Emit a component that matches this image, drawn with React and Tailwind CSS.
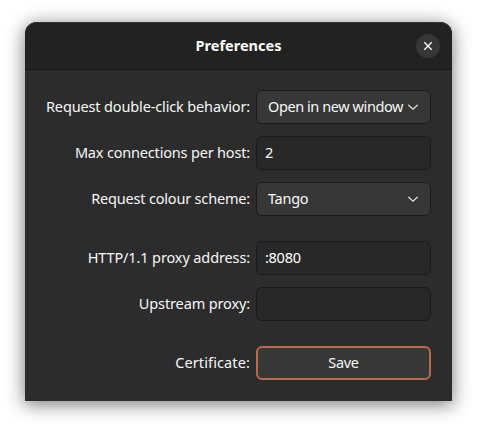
import React from 'react';

function Chevron() {
  return (
    <svg width="16" height="16" viewBox="0 0 16 16" className="shrink-0" fill="none" stroke="#dededc" strokeWidth="1.3" strokeLinecap="round">
      <path d="M3.7 6.3 L8 10.2 L12.3 6.3" />
    </svg>
  );
}

function Label({ children, spacing }) {
  return (
    <span className={`flex w-[204px] shrink-0 justify-end whitespace-nowrap pb-0.5 ${spacing}`}>
      <span>{children}</span>
    </span>
  );
}

function Row({ label, spacing, children }) {
  return (
    <div className="flex h-[34px] items-center gap-1.5">
      <Label spacing={spacing}>{label}</Label>
      {children}
    </div>
  );
}

function Select({ children, spacing }) {
  return (
    <button className={`flex h-[34px] w-[175px] items-center justify-between whitespace-nowrap rounded-[6px] border border-[#1b1b1b] bg-[#373737] pr-[9px] pl-[11px] ${spacing}`}>
      <span className="pb-0.5">{children}</span>
      <Chevron />
    </button>
  );
}

function Field({ children }) {
  return (
    <div className="flex h-[34px] w-[175px] items-center rounded-[6px] border border-[#1b1b1b] bg-[#282828] px-2 tracking-[-0.28px] text-white">
      <span className="pb-0.5">{children}</span>
    </div>
  );
}

function Separator() {
  return <div className="h-px w-full bg-[#282828]" />;
}

export default function App() {
  return (
    <div className="h-[429px] w-[477px] overflow-hidden bg-white px-[25px] pt-[22px] font-['Noto_Sans',sans-serif] text-[14.5px] leading-5 text-[#f7f7f7]">
      <div className="flex h-[379px] w-[427px] flex-col rounded-t-[12px] bg-[#2c2c2c] shadow-[0_3px_18px_1px_rgba(0,0,0,0.5)]">
        <header className="grid h-12 shrink-0 grid-cols-[1fr_auto_1fr] items-center rounded-t-[12px] border-b border-[#181818] bg-[#222222] px-3 shadow-[inset_0_1px_0_#343434]">
          <span />
          <h1 className="pb-0.5 text-[14.5px] font-bold text-white">Preferences</h1>
          <button aria-label="Close" className="flex size-6 items-center justify-center justify-self-end rounded-full bg-[#373737]">
            <svg width="16" height="16" viewBox="0 0 16 16" fill="none" stroke="#ffffff" strokeWidth="1.3">
              <path d="M4.3 4.3 L11.7 11.7 M11.7 4.3 L4.3 11.7" />
            </svg>
          </button>
        </header>
        <main className="flex flex-col gap-3 px-[21px] pt-5">
          <Row label="Request double-click behavior:" spacing="tracking-[-0.14px]">
            <Select spacing="tracking-[-0.42px]">Open in new window</Select>
          </Row>
          <Row label="Max connections per host:" spacing="tracking-[-0.18px]">
            <Field>2</Field>
          </Row>
          <Row label="Request colour scheme:" spacing="tracking-[-0.18px]">
            <Select spacing="tracking-[-0.28px]">Tango</Select>
          </Row>
          <Separator />
          <Row label="HTTP/1.1 proxy address:" spacing="tracking-[-0.12px]">
            <Field>:8080</Field>
          </Row>
          <Row label="Upstream proxy:" spacing="tracking-[-0.13px]">
            <Field />
          </Row>
          <Separator />
          <Row label="Certificate:" spacing="tracking-[0.12px]">
            <button className="flex h-[34px] w-[175px] items-center justify-center rounded-[6px] border-2 border-[#bb694d] bg-[#373737] tracking-[-0.28px]">
              <span className="pb-0.5">Save</span>
            </button>
          </Row>
        </main>
      </div>
    </div>
  );
}
